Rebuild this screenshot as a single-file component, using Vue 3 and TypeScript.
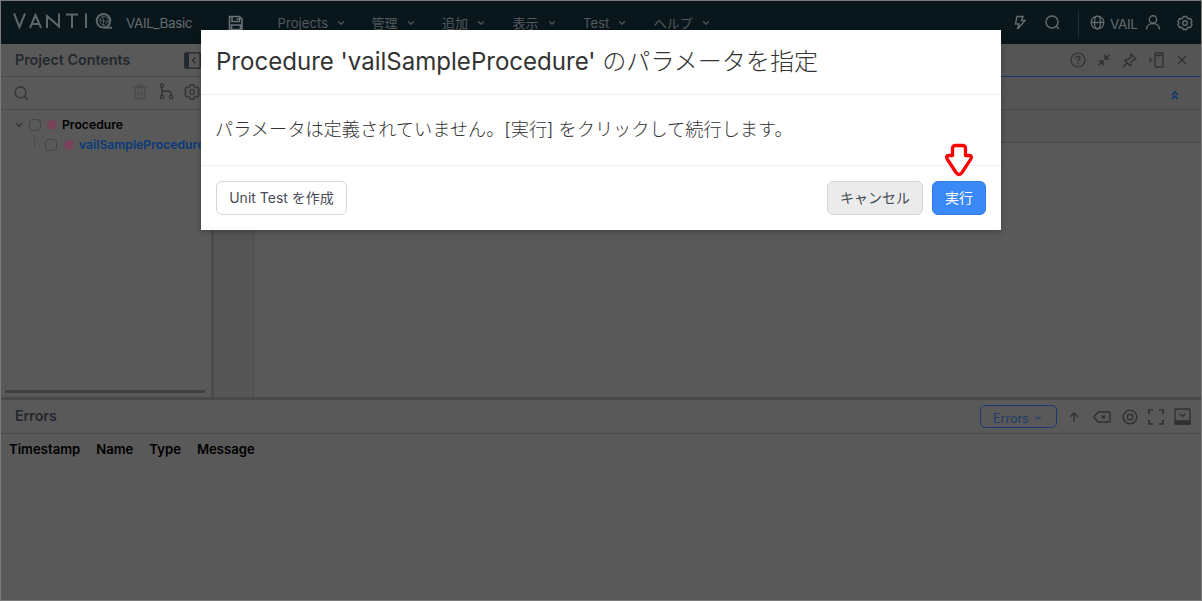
<script setup lang="ts">
interface MenuItem { label: string; width: number }
const menus: MenuItem[] = [
  { label: 'Projects', width: 94 },
  { label: '管理', width: 70.5 },
  { label: '追加', width: 70.5 },
  { label: '表示', width: 70.5 },
  { label: 'Test', width: 70.5 },
  { label: 'ヘルプ', width: 70 },
]
const columns: string[] = ['Timestamp', 'Name', 'Type', 'Message']
</script>

<template>
  <div class="app">
    <header class="topbar">
      <svg class="logo" width="100" height="18" viewBox="0 0 100 18" fill="none" stroke="currentColor" stroke-width="2">
        <path d="M1 1.500 L6.500 15 L12 1.500 M17 16 L22.500 3 L28 16 M19.500 12H25.500 M34 16V4L46 14.500V1.500 M53 2.500H65 M59 2.500V16 M73 1.500V16" />
        <circle cx="90.500" cy="8.800" r="6.800" />
        <path stroke-width=".8" d="M86.500 8l3-4 5 1.500 1 4-4.500 4-3.500-2zM89.500 4l1 5 5 .5M86.500 8l4 1v4.500" />
        <path d="M91 15.700h8" />
      </svg>
      <span class="namespace">VAIL_Basic</span>
      <svg class="save" width="16" height="16" viewBox="0 0 16 16" fill="none" stroke="currentColor" stroke-width="1.6">
        <path d="M1.500 1.500h10l2.500 2.500v10.500h-12.500zM4 1.500v5h7.500v-5M3.500 14v-4h9v4M9.500 3v2" />
      </svg>
      <nav>
        <span v-for="m in menus" :key="m.label" class="menu" :style="{ width: m.width + 'px' }">
          <span>{{ m.label }}</span>
          <svg width="8" height="6" viewBox="0 0 8 6" fill="none" stroke="currentColor" stroke-width="1.3"><path d="M1.200 1.500L4 4.200l2.800-2.700" /></svg>
        </span>
      </nav>
      <div class="account">
        <svg class="bolt" width="12" height="16" viewBox="0 0 12 16" fill="none" stroke="currentColor" stroke-width="1.4"><path d="M3 1.500h6L7.500 5.500H11L3.500 14 5 9H1.500z" /></svg>
        <svg class="search" width="15" height="15" viewBox="0 0 15 15" fill="none" stroke="currentColor" stroke-width="1.4"><circle cx="7" cy="7" r="6" /><path d="M11.300 11.300L14 14" /></svg>
        <i class="separator"></i>
        <svg width="15" height="15" viewBox="0 0 15 15" fill="none" stroke="currentColor" stroke-width="1.3"><circle cx="7.500" cy="7.500" r="6.300" /><ellipse cx="7.500" cy="7.500" rx="3" ry="6.300" /><path d="M1 7.500h13" /></svg>
        <span class="user">VAIL</span>
        <svg width="16" height="15" viewBox="0 0 16 15" fill="none" stroke="currentColor" stroke-width="1.4"><circle cx="8" cy="4.500" r="3.700" /><path d="M1.500 14.500c0-8 13-8 13 0" /></svg>
        <svg class="gear" width="16" height="16" viewBox="0 0 16 16" fill="none" stroke="currentColor" stroke-width="1.4"><path d="M6.300 1.500h3.400l.8 1.700 1 .6 1.900-.2 1.600 2.900L14 8l1 1.500-1.600 2.900-1.900-.2-1 .6-.8 1.700H6.300l-.8-1.700-1-.6-1.900.2L1 9.500 2 8 1 6.500l1.600-2.900 1.900.2 1-.6z" /><circle cx="8" cy="8" r="2.300" /></svg>
      </div>
    </header>

    <div class="workspace">
      <aside>
        <div class="panel-title">
          <b>Project Contents</b>
          <svg width="17" height="17" viewBox="0 0 17 17"><rect x=".8" y=".8" width="15.400" height="15.400" rx="1" fill="none" stroke="currentColor" stroke-width="1.300" /><path d="M1 1h4v15H1z" fill="currentColor" /><path d="M11.500 5.500l-3 3 3 3" fill="none" stroke="currentColor" stroke-width="1.200" /></svg>
        </div>
        <div class="tools">
          <svg width="15" height="15" viewBox="0 0 15 15" fill="none" stroke="currentColor" stroke-width="1.3"><circle cx="6.500" cy="6.500" r="5.500" /><path d="M10.500 10.500l3 3" /></svg>
          <svg class="trash" width="14" height="16" viewBox="0 0 14 16" fill="none" stroke="currentColor" stroke-width="1.3"><path d="M.5 3.500h13M4.500 3.500v-2h5v2M2.500 3.500v11h9v-11M5.500 7v4.500M8.500 7v4.500" /></svg>
          <svg class="branch" width="15" height="17" viewBox="0 0 15 17" fill="none" stroke="currentColor" stroke-width="1.3"><circle cx="3" cy="2.500" r="1.700" /><circle cx="3" cy="14" r="1.700" /><circle cx="12" cy="14" r="1.700" /><path d="M3 4.200v8.100M3 8h6q3 0 3 4" /></svg>
          <svg class="cog" width="16" height="16" viewBox="0 0 16 16" fill="none" stroke="currentColor" stroke-width="1.3"><path d="M6.300 1h3.400l.8 2 1 .6 2.100-.3 1.700 3L13.900 8l1.400 1.700-1.700 3-2.100-.3-1 .6-.8 2H6.300l-.8-2-1-.6-2.100.3-1.700-3L2.100 8 .7 6.300l1.700-3 2.100.3 1-.6z" /><circle cx="8" cy="8" r="2.300" /></svg>
        </div>
        <div class="tree">
          <div class="node">
            <svg width="8" height="6" viewBox="0 0 8 6" fill="none" stroke="currentColor" stroke-width="1.200"><path d="M1 1l3 3.500L7 1" /></svg>
            <i class="check"></i><i class="dot"></i><span>Procedure</span>
          </div>
          <div class="node child"><i class="stem"></i><i class="check"></i><i class="dot"></i><span>vailSampleProcedure</span></div>
        </div>
        <div class="scrollbar"></div>
      </aside>
      <main>
        <div class="editor-title">
          <svg width="16" height="16" viewBox="0 0 16 16" fill="none" stroke="currentColor" stroke-width="1.200"><circle cx="8" cy="8" r="7" /><path d="M6 6.300c0-2.800 4-2.500 4-.2 0 1.400-2 1.500-2 3.200" stroke-width="1.500" /><path d="M8 10.700v1.500" stroke-width="1.500" /></svg>
          <svg width="12" height="12" viewBox="0 0 12 12" fill="none" stroke="currentColor" stroke-width="1.200"><path d="M11.500.5L8 4M.5 11.500L4 8" /><path d="M7 1.500V5h3.500zM1.500 7H5v3.500z" fill="currentColor" /></svg>
          <svg width="15" height="15" viewBox="0 0 15 15" fill="none" stroke="currentColor" stroke-width="1.300"><path d="M9 1l5 5-1.500 1-1-.5-2.500 3v2l-1 1L3 7.500l1-1h2l3-2.500L8.500 2.500zM5.300 9.800L1 14" /></svg>
          <svg width="15" height="16" viewBox="0 0 15 16" fill="none" stroke="currentColor" stroke-width="1.300"><rect x="6" y="1" width="8" height="14" rx="1" /><path d="M6 3.500h8M.500 6l2 2-2 2" /></svg>
          <svg width="10" height="10" viewBox="0 0 10 10" fill="none" stroke="currentColor" stroke-width="1.200"><path d="M1 1l8 8M9 1L1 9" /></svg>
        </div>
        <div class="fold-row"><svg width="8" height="9" viewBox="0 0 8 9" fill="none" stroke="currentColor" stroke-width="1.500"><path d="M1 4l3-3 3 3M1 8l3-3 3 3" /></svg></div>
        <div class="toolbar-row"></div>
        <div class="editor"><div class="gutter"></div></div>
      </main>
    </div>

    <section class="errors">
      <div class="errors-title">
        <b>Errors</b>
        <div class="error-tools">
          <span class="filter">Errors <svg width="8" height="6" viewBox="0 0 8 6" fill="none" stroke="currentColor" stroke-width="1.200"><path d="M1.500 1.500L4 4l2.500-2.500" /></svg></span>
          <svg class="up" width="10" height="10" viewBox="0 0 10 10" fill="none" stroke="currentColor" stroke-width="1.300"><path d="M5 10V1M1 5l4-4 4 4" /></svg>
          <svg class="erase" width="18" height="12" viewBox="0 0 18 12" fill="none" stroke="currentColor" stroke-width="1.400"><path d="M5 1h11q1 0 1 1v8q0 1-1 1H5L1 6zM9 4.500l3 3M12 4.500l-3 3" /></svg>
          <svg class="stop" width="16" height="16" viewBox="0 0 16 16" fill="none" stroke="currentColor" stroke-width="1.300"><circle cx="8" cy="8" r="6.800" /><rect x="5.500" y="5.500" width="5" height="5" rx="1" /></svg>
          <svg class="expand" width="16" height="16" viewBox="0 0 16 16" fill="none" stroke="currentColor" stroke-width="1.600"><path d="M1 5V1h4M11 1h4v4M15 11v4h-4M5 15H1v-4" /></svg>
          <svg class="dock" width="17" height="17" viewBox="0 0 17 17" fill="none" stroke="currentColor" stroke-width="1.300"><rect x="1" y="1" width="15" height="15" rx="1" /><path d="M5.500 5.500l3 3 3-3" /><path d="M1 13h15v3H1z" fill="currentColor" /></svg>
        </div>
      </div>
      <div class="columns"><b v-for="c in columns" :key="c">{{ c }}</b></div>
    </section>

    <div class="dialog" role="dialog">
      <h1><span>Procedure 'vailSampleProcedure'</span> のパラメータを指定</h1>
      <p>パラメータは定義されていません。[実行] をクリックして続行します。</p>
      <footer>
        <button>Unit Test を作成</button>
        <button class="cancel">キャンセル</button>
        <button class="run">実行</button>
      </footer>
      <svg class="pointer" width="30" height="34" viewBox="0 0 30 34"><path d="M8.500 12.500V5.500Q8.500 2.500 11.500 2.500h7Q21.500 2.500 21.500 5.500v7h3.500q4 0 1.500 4L18 29.500q-3 4-6 0L3.500 16.500Q1 12.500 5 12.500z" fill="#fff" stroke="#f00" stroke-width="3.300" stroke-linejoin="round" /></svg>
    </div>
  </div>
</template>

<style>
body { overflow: hidden; }
</style>
<style scoped>
* { box-sizing: border-box; }
svg { display: block; flex: none; }
.app { position: relative; width: 1202px; height: 601px; border: 1px solid #7b7b7b; background: #595959; font-family: Inter, "Noto Sans CJK JP", sans-serif; font-size: 13px; color: #333; overflow: hidden; display: flex; flex-direction: column; }
.topbar { height: 43px; background: #09171c; color: #666b6d; display: flex; align-items: center; flex: none; }
.logo { margin: 0 0 3px 12px; color: #5f6669; }
.namespace { width: 102px; margin-left: 13px; font-size: 13.5px; letter-spacing: -.4px; padding-top: 1px; white-space: nowrap; }
.save { color: #697176; }
nav { display: flex; margin-left: 33.5px; font-size: 13px; color: #53595d; }
.menu { display: flex; align-items: center; gap: 9px; white-space: nowrap; height: 20px; line-height: 20px; flex: none; }
.menu span { letter-spacing: .1px; }
.account { display: flex; align-items: center; margin-left: auto; margin-right: 8px; font-size: 13px; color: #666b6d; }
.bolt { margin-right: 19px; }
.separator { width: 1px; height: 26px; background: #243238; margin: 2px 11px 0 18px; }
.user { margin: 2px 8px 0 5px; font-size: 13.500px; letter-spacing: -.4px; width: 27px; }
.gear { margin-left: 16px; }
.workspace { height: 353px; display: flex; flex: none; }
aside { width: 213px; border-right: 3px solid #4b4b4b; flex: none; display: flex; flex-direction: column; }
.panel-title { height: 33px; border-bottom: 1px solid #494949; display: flex; justify-content: space-between; align-items: center; padding: 0 10px 0 14px; font-size: 14.3px; color: #23272e; }
.panel-title b { padding-bottom: 1px; }
.panel-title b, .errors-title b { font-weight: 600; }
.tools { height: 33px; display: flex; align-items: center; padding-left: 13px; border-bottom: 1px solid #494949; color: #333; flex: none; }
.trash { margin: 0 0 3px 104px; color: #4a4a4a; }
.branch { margin: 0 0 3px 12px; }
.cog { margin: 0 0 3px 10px; }
.tree { padding-top: 5px; font-size: 12.2px; font-weight: 600; color: #000; }
.node { display: flex; height: 20px; align-items: center; padding-left: 14px; }
.node span { padding-bottom: 1px; }
.node > svg { color: #333; }
.check { width: 12px; height: 12px; border: 1px solid #444; border-radius: 4px; margin-left: 6px; flex: none; }
.dot { width: 10px; height: 10px; background: #77435b; border-radius: 50%; margin: 0 5px 0 6px; flex: none; }
.child { padding-left: 33px; color: #083a7a; }
.child .dot { margin-left: 7px; }
.stem { height: 12px; width: 1px; background: #494949; align-self: flex-start; }
.child .check { margin-left: 10px; }
.scrollbar { height: 3px; width: 200px; background: #404040; margin: auto 0 4px 4px; }
main { flex: 1; display: flex; flex-direction: column; background: #555; min-width: 0; }
.editor-title { height: 33px; border-bottom: 1px solid #19396d; display: flex; align-items: center; justify-content: flex-end; gap: 12px; padding-right: 14px; color: #303030; flex: none; }
.editor-title svg:nth-child(-n+4) { transform: translateX(-1px); }
.fold-row, .toolbar-row { height: 33px; border-bottom: 1px solid #494949; display: flex; align-items: center; justify-content: flex-end; flex: none; }
.fold-row { padding: 4px 22px 0 0; color: #07346b; }
.editor { flex: 1; background: #595959; }
.gutter { width: 40px; height: 100%; background: #555; border-right: 1px solid #4d4d4d; }
.errors { border-top: 3px solid #494949; }
.errors-title { height: 34px; display: flex; justify-content: space-between; align-items: center; padding: 0 10px 0 14px; border-bottom: 1px solid #494949; font-size: 14px; color: #23272e; }
.errors-title b { padding-bottom: 2px; font-size: 14.200px; }
.error-tools { display: flex; align-items: center; color: #303030; }
.filter { width: 77px; height: 23px; border: 1px solid #183a73; border-radius: 5px; color: #203c6b; font-size: 12.5px; display: flex; align-items: center; gap: 5px; padding: 4px 0 0 12px; }
.filter svg { margin-bottom: 2px; }
.up { margin-left: 12px; }
.erase { margin-left: 14px; }
.stop { margin-left: 11px; }
.expand { margin-left: 10px; }
.dock { margin-left: 10px; }
.columns { display: flex; gap: 16px; padding: 7px 8px; font-size: 13.150px; line-height: 16px; color: #000; }
.columns b { font-weight: 600; }
.dialog { position: absolute; left: 200px; top: 29px; width: 800px; height: 200px; background: #fff; color: #333; box-shadow: 0 2px 6px rgba(0, 0, 0, .25); display: flex; flex-direction: column; }
h1 { height: 65px; border-bottom: 1px solid #efefef; margin: 0; padding: 0 15px; line-height: 64px; font-size: 24.050px; font-weight: 300; white-space: nowrap; }
h1 span { font-weight: 400; }
p { height: 71px; margin: 0; padding: 0 14px; line-height: 69px; font-size: 18.200px; font-weight: 300; border-bottom: 1px solid #efefef; white-space: nowrap; }
footer { display: flex; padding: 15px; gap: 9px; }
button { height: 34px; width: 131px; border: 1px solid #d5d6d8; border-radius: 6px; background: #fff; padding: 0 0 2px; font: 400 14px Inter, "Noto Sans CJK JP", sans-serif; color: #454b56; white-space: nowrap; }
.cancel { margin-left: auto; width: 96px; background: #ebebeb; }
.run { width: 54px; background: #3b88f7; color: #fff; border-color: #2d7be9; }
.pointer { position: absolute; left: 743px; top: 113px; }
</style>
